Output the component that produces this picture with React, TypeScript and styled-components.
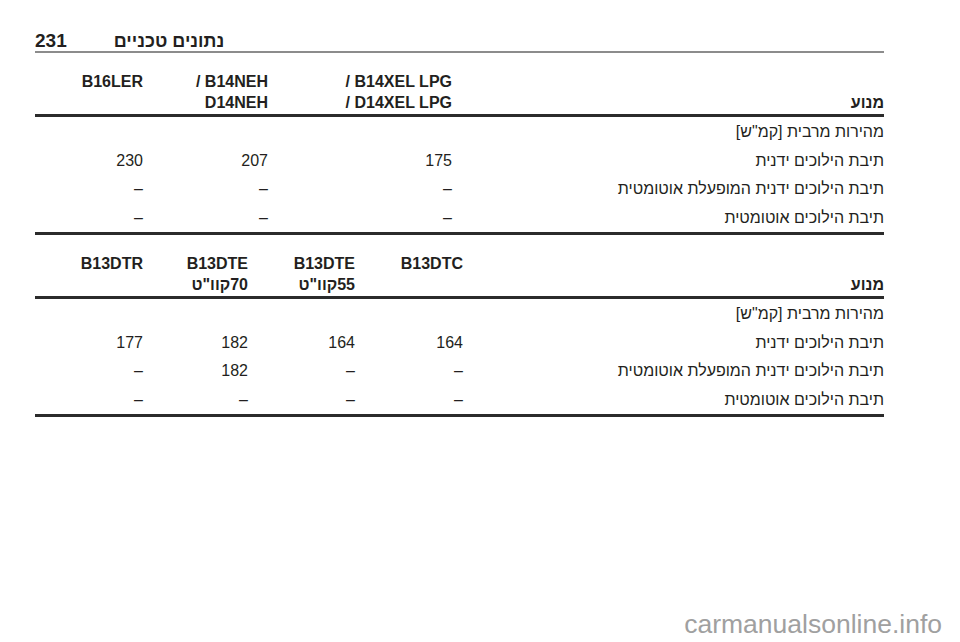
import React from "react";
import styled, { createGlobalStyle } from "styled-components";

const GlobalStyle = createGlobalStyle`
  html, body {
    margin: 0;
    padding: 0;
    background: #ffffff;
  }
  body {
    font-family: "Liberation Sans", Arial, "DejaVu Sans", sans-serif;
    color: #231f20;
  }
`;

const Sheet = styled.div`
  position: relative;
  width: 960px;
  height: 642px;
  overflow: hidden;
  box-sizing: border-box;
  padding: 31px 76px 0 35px;
`;

const RunningHead = styled.div`
  display: flex;
  align-items: baseline;
  gap: 47px;
  font-size: 18px;
  font-weight: 700;
  line-height: 19px;
  border-bottom: 2px solid #8c8c8c;
`;

const PageNo = styled.span`
  font-size: 19px;
`;

const Chapter = styled.span`
  direction: rtl;
`;

const SpecTable = styled.div`
  border-bottom: 3px solid #2b2b2b;
`;

const HeadRow = styled.div<{ $cols: string }>`
  display: grid;
  direction: rtl;
  grid-template-columns: ${(p) => p.$cols};
  padding: 18px 0 1px;
  border-bottom: 3px solid #2b2b2b;
  font-size: 16px;
  font-weight: 700;
  line-height: 21px;
`;

const HeadCell = styled.div<{ $label?: boolean }>`
  display: flex;
  flex-direction: column;
  justify-content: flex-end;
  direction: ${(p) => (p.$label ? "rtl" : "ltr")};
  text-align: right;
  white-space: nowrap;
`;

const Line = styled.span<{ $rtl?: boolean }>`
  display: block;
  direction: ${(p) => (p.$rtl ? "rtl" : "ltr")};
  height: 21px;
`;

const Body = styled.div`
  padding-top: 1px;
`;

const BodyRow = styled.div<{ $cols: string }>`
  display: grid;
  direction: rtl;
  grid-template-columns: ${(p) => p.$cols};
  height: 28.5px;
  align-items: center;
  font-size: 16px;
  line-height: 28.5px;
`;

const Label = styled.div`
  direction: rtl;
  text-align: right;
  white-space: nowrap;
`;

const Value = styled.div`
  direction: ltr;
  text-align: right;
`;

const Watermark = styled.div`
  position: absolute;
  right: 18px;
  bottom: 2px;
  font-size: 26.5px;
  line-height: 32px;
  color: #a0a0a0;
`;

type Head = { top?: string; bottom?: string; rtl?: boolean };

const rowLabels = [
  "מהירות מרבית [קמ\"ש]",
  "תיבת הילוכים ידנית",
  "תיבת הילוכים ידנית המופעלת אוטומטית",
  "תיבת הילוכים אוטומטית",
];

const Table = ({
  cols,
  heads,
  values,
}: {
  cols: string;
  heads: Head[];
  values: string[][];
}) => (
  <SpecTable>
    <HeadRow $cols={cols}>
      <HeadCell $label>
        <Line $rtl>מנוע</Line>
      </HeadCell>
      {heads.map((h, i) => (
        <HeadCell key={i}>
          <Line>{h.top}</Line>
          <Line $rtl={h.rtl}>{h.bottom}</Line>
        </HeadCell>
      ))}
    </HeadRow>
    <Body>
      {rowLabels.map((label, r) => (
        <BodyRow key={r} $cols={cols}>
          <Label>{label}</Label>
          {values.map((col, c) => (
            <Value key={c}>{col[r]}</Value>
          ))}
        </BodyRow>
      ))}
    </Body>
  </SpecTable>
);

const DASH = "–";

export default function App() {
  return (
    <>
      <GlobalStyle />
      <Sheet>
        <RunningHead>
          <PageNo>231</PageNo>
          <Chapter>נתונים טכניים</Chapter>
        </RunningHead>

        <Table
          cols="432px 184px 125px 108px"
          heads={[
            { top: "/ B14XEL LPG", bottom: "/ D14XEL LPG" },
            { top: "/ B14NEH", bottom: "D14NEH" },
            { top: "B16LER", bottom: "" },
          ]}
          values={[
            ["", "175", DASH, DASH],
            ["", "207", DASH, DASH],
            ["", "230", DASH, DASH],
          ]}
        />

        <Table
          cols="421px 108px 107px 105px 108px"
          heads={[
            { top: "B13DTC", bottom: "" },
            { top: "B13DTE", bottom: "55קוו\"ט", rtl: true },
            { top: "B13DTE", bottom: "70קוו\"ט", rtl: true },
            { top: "B13DTR", bottom: "" },
          ]}
          values={[
            ["", "164", DASH, DASH],
            ["", "164", DASH, DASH],
            ["", "182", "182", DASH],
            ["", "177", DASH, DASH],
          ]}
        />

        <Watermark>carmanualsonline.info</Watermark>
      </Sheet>
    </>
  );
}
